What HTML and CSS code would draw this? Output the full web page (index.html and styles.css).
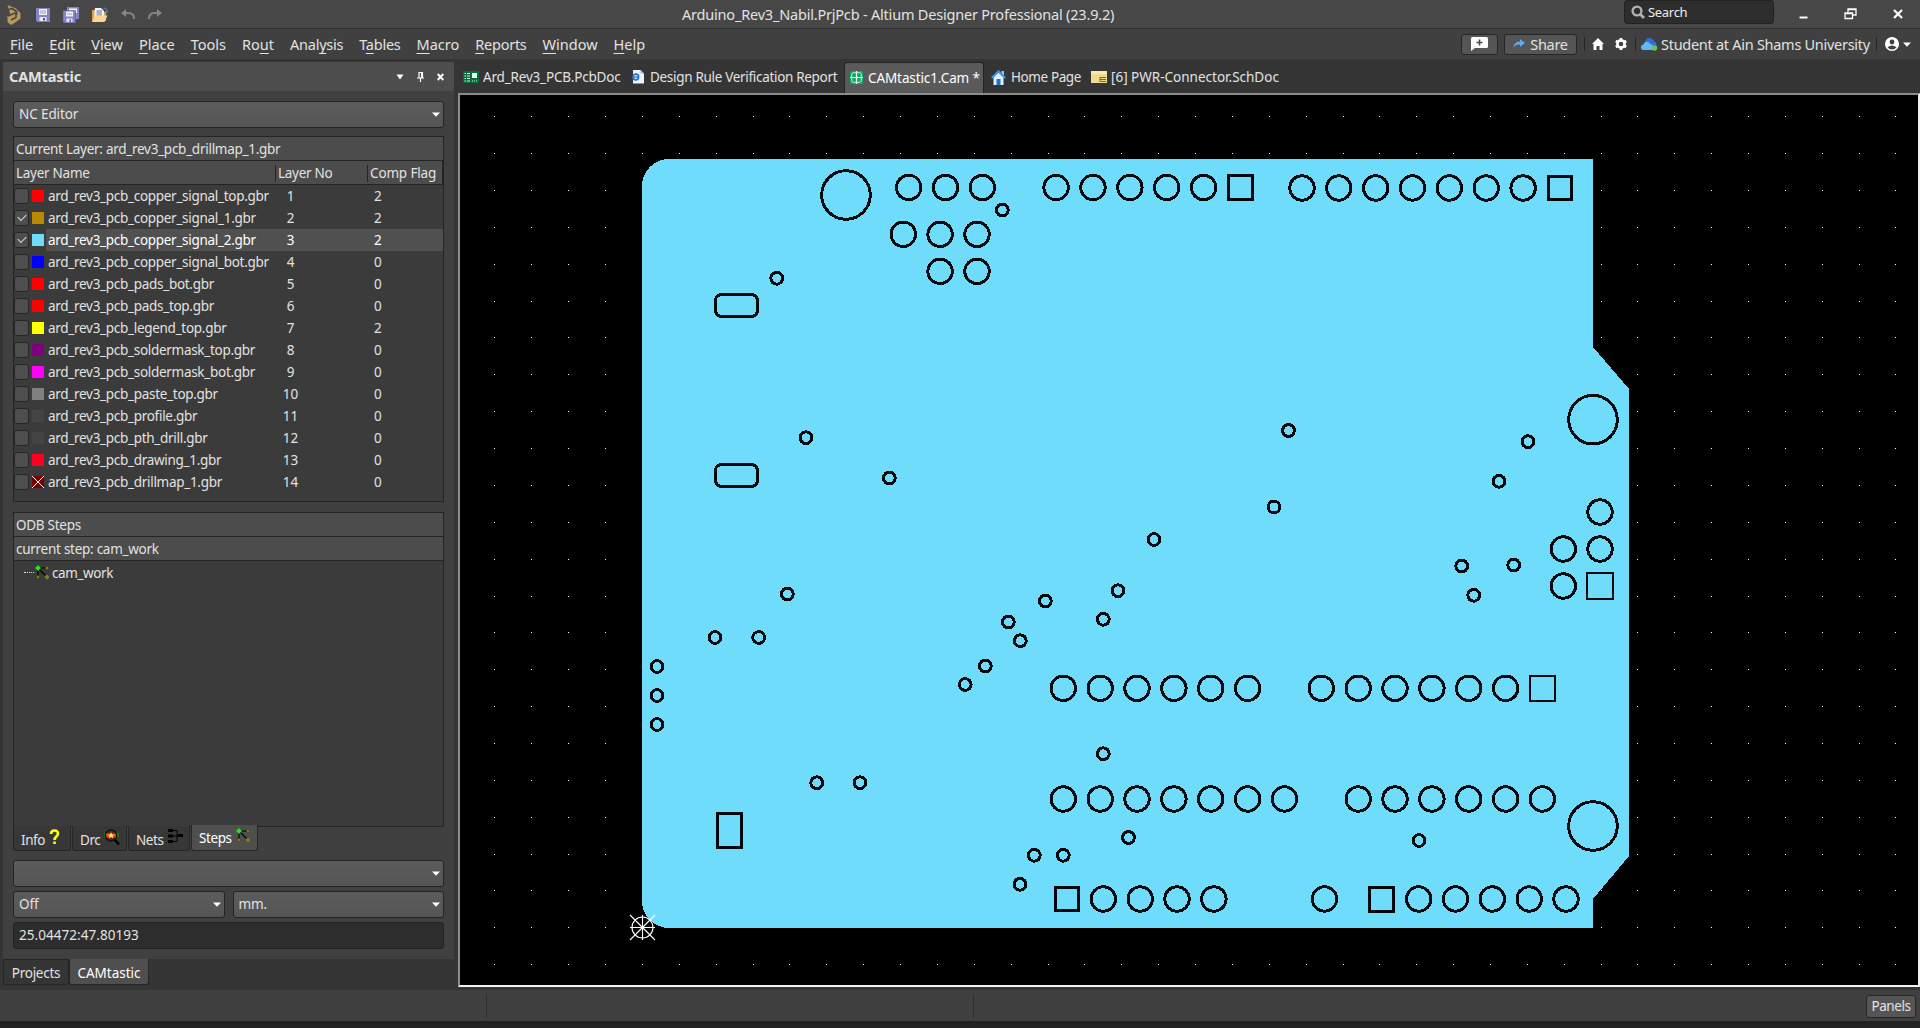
FILE: index.html
```
<!DOCTYPE html>
<html lang="en">
<head>
<meta charset="utf-8">
<title>Arduino_Rev3_Nabil.PrjPcb - Altium Designer Professional (23.9.2)</title>
<link rel="stylesheet" href="styles.css">
</head>
<body>
<svg class="defs" width="0" height="0" aria-hidden="true">
  <defs>
    <symbol id="steps-icon" viewBox="0 0 16 16">
      <path d="M3 3H12M3 3V12M3 3L12 12" stroke="#000" stroke-width="1.2" fill="none"/>
      <path d="M3 0L6 3L3 6L0 3Z" fill="#1fe41f"/>
      <path d="M12 1L14 3L12 5L10 3ZM3 10L5 12L3 14L1 12ZM12 9L15 12L12 15L9 12Z" fill="#80801c" stroke="#222" stroke-width=".4"/>
    </symbol>
    <symbol id="caret" viewBox="0 0 8 5"><path d="M0 0.5H8L4 4.8Z" fill="#fff"/></symbol>
  </defs>
</svg>
<div class="app">
  <header class="titlebar">
    <div class="quick">
      <svg width="14" height="20" viewBox="0 0 14 20"><path d="M.5 0L9 3.500L13.500 8V13.500L9 17L4 20L.5 17V11L6 7.500H9V12L5 14.500" fill="#b59a5c"/><path d="M.5 5L5 3.500L9.500 6.500V10M1 11L8 8" stroke="#474747" stroke-width="1.800" fill="none"/><path d="M4 15L9 12.500V7" stroke="#474747" stroke-width="1.600" fill="none"/></svg>
      <svg width="14" height="14" viewBox="0 0 14 14"><path d="M0 0H14V14H1.500L0 12.500Z" fill="#8583c8"/><path d="M3 1H11V7H3Z" fill="#f2f2fb"/><path d="M4 3H10M4 5H10" stroke="#9a9ac0"/><path d="M3.500 9H10.500V13H3.500Z" fill="#e8e8f4"/><path d="M7 10H9V12.500H7Z" fill="#55558f"/></svg>
      <svg width="16" height="16" viewBox="0 0 16 16"><path d="M4 0H16V12H4Z" fill="#8583c8"/><path d="M6 1.500H14V6H6Z" fill="#f2f2fb"/><path d="M0 3.500H12.500V16H1.500L0 14.500Z" fill="#8583c8" stroke="#5c5a92" stroke-width=".6"/><path d="M3 4.500H10V9.500H3Z" fill="#f2f2fb"/><path d="M4 7H9" stroke="#9a9ac0"/><path d="M3.500 11.500H9.500V15H3.500Z" fill="#e8e8f4"/><path d="M6.500 12.500H8V15H6.500Z" fill="#55558f"/></svg>
      <svg width="16" height="16" viewBox="0 0 16 16"><path d="M0 3H5L6 5H14V14H0Z" fill="#d9a14b"/><path d="M3 1H9L12 4V11H2Z" fill="#f4f6fa"/><path d="M4.500 4H10M4.500 6H10M4.500 8H10" stroke="#5d6f92"/><path d="M0 15L3 8.500H15.500L12.500 15Z" fill="#f7d792"/><path d="M11 1.500C14 .5 15 2 15 5M13 4L15 5.500L16 3.500" stroke="#4a7ba6" stroke-width="1.200" fill="none"/></svg>
      <svg class="undo" width="14" height="12" viewBox="0 0 14 12"><path d="M1 4H7.500C11 4 13 6.500 13 10" stroke="#848484" stroke-width="2" fill="none"/><path d="M0 4L5 0V8Z" fill="#848484"/></svg>
      <svg class="redo" width="14" height="12" viewBox="0 0 14 12"><path d="M13 4H6.500C3 4 1 6.500 1 10" stroke="#848484" stroke-width="2" fill="none"/><path d="M14 4L9 0V8Z" fill="#848484"/></svg>
    </div>
    <div class="caption"><span>Arduino_Rev3_Nabil.PrjPcb - Altium Designer Professional (23.9.2)</span></div>
    <div class="search"><svg width="14" height="14" viewBox="0 0 14 14"><circle cx="6" cy="6" r="4.400" fill="none" stroke="#b0b0b0" stroke-width="2.400"/><path d="M9.200 9.200L13 13" stroke="#b0b0b0" stroke-width="2.800"/></svg><span>Search</span></div>
    <div class="winbtns">
      <svg width="9" height="12" viewBox="0 0 9 12"><path d="M0.500 9.500H8.500" stroke="#fff" stroke-width="2"/></svg>
      <svg width="13" height="12" viewBox="0 0 13 12"><path d="M4 4V1H12V7H9M4 1.500H12" stroke="#fff" stroke-width="1.300" fill="none"/><path d="M1 5H8.500V10.500H1ZM1 5.500H8.500" stroke="#fff" stroke-width="1.300" fill="none"/></svg>
      <svg width="10" height="10" viewBox="0 0 10 10"><path d="M1 1L9 9M9 1L1 9" stroke="#fff" stroke-width="2.200"/></svg>
    </div>
  </header>

  <nav class="menubar">
    <div class="menus">
      <span><u>F</u>ile</span><span><u>E</u>dit</span><span><u>V</u>iew</span><span><u>P</u>lace</span><span><u>T</u>ools</span><span>Ro<u>u</u>t</span><span class="tight">Anal<u>y</u>sis</span><span class="tight">T<u>a</u>bles</span><span><u>M</u>acro</span><span class="tight"><u>R</u>eports</span><span><u>W</u>indow</span><span><u>H</u>elp</span>
    </div>
    <div class="account">
      <button class="btn note"><svg width="17" height="14" viewBox="0 0 17 14"><path d="M1.500 0H15.500Q17 0 17 1.500V9.500Q17 11 15.500 11H4L0 14V1.500Q0 0 1.500 0Z" fill="#fff"/><path d="M8.500 2.500V8.500M5.500 5.500H11.500" stroke="#4a4a4a" stroke-width="1.600"/></svg></button>
      <button class="btn share"><svg width="12" height="10" viewBox="0 0 12 10"><path d="M7 0L12 4L7 8V5.500C4 5.300 2 6.300 0 8.800C.7 5 3 2.800 7 2.600Z" fill="#62a8f0"/></svg><span>Share</span></button>
      <i class="sep"></i>
      <svg class="home" width="12" height="12" viewBox="0 0 12 12"><path d="M6 0L12 6H10.500V12H7.500V8H4.500V12H1.500V6H0Z" fill="#fff"/></svg>
      <svg class="gear" width="12" height="12" viewBox="0 0 12 12"><circle cx="6" cy="6" r="3.600" fill="none" stroke="#fff" stroke-width="2.600"/><path d="M6 0V2M6 10V12M.8 3L2.600 4M9.400 8L11.200 9M.8 9L2.600 8M9.400 4L11.200 3" stroke="#fff" stroke-width="2.600"/></svg>
      <i class="sep"></i>
      <svg class="cloud" width="17" height="13" viewBox="0 0 17 13"><path d="M4 5C4 2 6 0 8.500 0S12.500 2 13 3.500C15 4 16 5.500 15.500 8L9 9Z" fill="#2f6fd6"/><path d="M3 12C-1 12-1 7 2.500 6.500C3 3 8 3 9 6C12 6 12.500 9 11.500 12Z" fill="#64b8f4"/><circle cx="13.500" cy="10" r="2.800" fill="#67c15e"/></svg>
      <span class="student">Student at Ain Shams University</span>
      <i class="sep"></i>
      <svg class="user" width="14" height="14" viewBox="0 0 14 14"><circle cx="7" cy="7" r="7" fill="#fff"/><circle cx="7" cy="5" r="2.400" fill="#404040"/><path d="M2.500 10.200Q7 6.800 11.500 10.200Q9.800 12.600 7 12.600T2.500 10.200Z" fill="#404040"/></svg>
      <svg width="8" height="5"><use href="#caret"/></svg>
    </div>
  </nav>

  <main class="work">
    <aside class="side">
      <section class="panel">
        <div class="panel-head"><b>CAMtastic</b>
          <svg width="8" height="6" viewBox="0 0 8 6"><path d="M.5 .5H7.500L4 5.500Z" fill="#fff"/></svg>
          <svg width="7" height="10" viewBox="0 0 7 10"><path d="M1.500 .5H5.500V5.500M2 .5V5.500M0 6H7M3.500 6V10" stroke="#fff" stroke-width="1.200" fill="none"/><path d="M4 1H6V6H4Z" fill="#fff"/></svg>
          <svg width="7" height="8" viewBox="0 0 7 8"><path d="M.7 1L6.300 7M6.300 1L.7 7" stroke="#fff" stroke-width="1.900"/></svg>
        </div>
        <div class="panel-body">
          <div class="combo"><span>NC Editor</span><svg width="8" height="5"><use href="#caret"/></svg></div>
          <div class="list layers">
            <div class="hd"><span>Current Layer: ard_rev3_pcb_drillmap_1.gbr</span></div>
            <div class="hd cols"><span>Layer Name</span><span>Layer No</span><span>Comp Flag</span></div>
            <div class="row"><i class="cb"></i><i class="sw red"></i><div><span>ard_rev3_pcb_copper_signal_top.gbr</span><span>1</span><span>2</span></div></div>
            <div class="row"><i class="cb on"></i><i class="sw gold"></i><div><span>ard_rev3_pcb_copper_signal_1.gbr</span><span>2</span><span>2</span></div></div>
            <div class="row sel"><i class="cb on"></i><i class="sw sky"></i><div><span>ard_rev3_pcb_copper_signal_2.gbr</span><span>3</span><span>2</span></div></div>
            <div class="row"><i class="cb"></i><i class="sw blue"></i><div><span>ard_rev3_pcb_copper_signal_bot.gbr</span><span>4</span><span>0</span></div></div>
            <div class="row"><i class="cb"></i><i class="sw red"></i><div><span>ard_rev3_pcb_pads_bot.gbr</span><span>5</span><span>0</span></div></div>
            <div class="row"><i class="cb"></i><i class="sw red"></i><div><span>ard_rev3_pcb_pads_top.gbr</span><span>6</span><span>0</span></div></div>
            <div class="row"><i class="cb"></i><i class="sw yellow"></i><div><span>ard_rev3_pcb_legend_top.gbr</span><span>7</span><span>2</span></div></div>
            <div class="row"><i class="cb"></i><i class="sw purple"></i><div><span>ard_rev3_pcb_soldermask_top.gbr</span><span>8</span><span>0</span></div></div>
            <div class="row"><i class="cb"></i><i class="sw magenta"></i><div><span>ard_rev3_pcb_soldermask_bot.gbr</span><span>9</span><span>0</span></div></div>
            <div class="row"><i class="cb"></i><i class="sw gray"></i><div><span>ard_rev3_pcb_paste_top.gbr</span><span>10</span><span>0</span></div></div>
            <div class="row"><i class="cb"></i><i class="sw dim"></i><div><span>ard_rev3_pcb_profile.gbr</span><span>11</span><span>0</span></div></div>
            <div class="row"><i class="cb"></i><i class="sw dim"></i><div><span>ard_rev3_pcb_pth_drill.gbr</span><span>12</span><span>0</span></div></div>
            <div class="row"><i class="cb"></i><i class="sw crimson"></i><div><span>ard_rev3_pcb_drawing_1.gbr</span><span>13</span><span>0</span></div></div>
            <div class="row"><i class="cb"></i><i class="sw cross"></i><div><span>ard_rev3_pcb_drillmap_1.gbr</span><span>14</span><span>0</span></div></div>
          </div>
          <div class="list steps">
            <div class="hd"><span>ODB Steps</span></div>
            <div class="hd"><span>current step: cam_work</span></div>
            <div class="tree"><i></i><svg width="16" height="16"><use href="#steps-icon"/></svg><span>cam_work</span></div>
          </div>
          <div class="subtabs">
            <div><span>Info</span><svg width="11" height="16" viewBox="0 0 11 16"><path d="M2 5C2 0 9 0 9 4.500C9 7.500 5.500 7.500 5.500 11M5.500 12.500V15" stroke="#444400" stroke-width="4" fill="none"/><path d="M2 5C2 0.500 9 0.500 9 4.500C9 7.500 5.500 7.500 5.500 11M5.500 12.500V15" stroke="#ffff1c" stroke-width="2.600" fill="none"/></svg></div>
            <div><span>Drc</span><svg width="16" height="16" viewBox="0 0 16 16"><path d="M0 6H15" stroke="#0a7a1a" stroke-width="5"/><circle cx="7" cy="6.500" r="5.500" fill="#5a2a10" stroke="#111" stroke-width="1.500"/><path d="M2 4.500H12V8.500H2Z" fill="#e03a1c"/><path d="M7 3L8 5.500H11L8.500 7L9.500 9.500L7 8L4.500 9.500L5.500 7L3 5.500H6Z" fill="#ffe45a"/><path d="M11 11L15 15.500" stroke="#000" stroke-width="2.500"/></svg></div>
            <div><span>Nets</span><svg width="15" height="14" viewBox="0 0 15 14"><path d="M0 0H5V3H0ZM0 5.500H5V8.500H0ZM0 11H5V14H0ZM10 5H15V8H10Z" fill="#000"/><path d="M5 1.500H9V12.500H5M5 7H15" stroke="#000" fill="none"/></svg></div>
            <div class="on"><span>Steps</span><svg width="16" height="16"><use href="#steps-icon"/></svg></div>
          </div>
          <div class="combo"><span></span><svg width="8" height="5"><use href="#caret"/></svg></div>
          <div class="pair">
            <div class="combo"><span>Off</span><svg width="8" height="5"><use href="#caret"/></svg></div>
            <div class="combo"><span>mm.</span><svg width="8" height="5"><use href="#caret"/></svg></div>
          </div>
          <div class="field"><span>25.04472:47.80193</span></div>
        </div>
      </section>
      <div class="side-tabs"><div><span>Projects</span></div><div class="on"><span>CAMtastic</span></div></div>
    </aside>

    <section class="editor">
      <div class="doctabs">
        <div><svg width="16" height="12" viewBox="0 0 16 12"><path d="M0 0H16V12H0Z" fill="#0b6b3c"/><path d="M1.500 2.500H3M4 2.500H7M1.500 5H3M4 5H7M1.500 7.500H3M4 7.500H7M1.500 10H3M4 10H7M9 10H10M11 10H12M13 10H14" stroke="#d6f5e4"/><path d="M9 2H14V7H9Z" fill="#e8fff2"/></svg><span>Ard_Rev3_PCB.PcbDoc</span></div>
        <div><svg width="12" height="14" viewBox="0 0 12 14"><path d="M1 0H8.500L12 3.500V13.500H1Z" fill="#eef3fb"/><path d="M8.500 0L12 3.500H8.500Z" fill="#9fb6d8"/><circle cx="3.800" cy="7" r="2.800" fill="none" stroke="#2370d8" stroke-width="1.700"/><path d="M1.500 7H6" stroke="#2370d8" stroke-width="1.300"/></svg><span>Design Rule Verification Report</span></div>
        <div class="on"><svg width="13" height="13" viewBox="0 0 13 13"><rect width="13" height="13" rx="1.500" fill="#16a862"/><rect x="1.700" y="1.700" width="9.600" height="9.600" rx="2" fill="none" stroke="#b8f5d6"/><path d="M6.500 0V13M0 6.500H13" stroke="#e8fff4" stroke-width="1.200"/></svg><span>CAMtastic1.Cam *</span></div>
        <div><svg width="15" height="15" viewBox="0 0 15 15"><path d="M10.500 1H13V5H10.500Z" fill="#9cc3ee"/><path d="M2.500 7L7.500 2.500L12.500 7V15H2.500Z" fill="#e4f0fc"/><path d="M.7 8L7.500 1.300L14.300 8" stroke="#3f94ea" stroke-width="2" fill="none"/><path d="M5.500 9H9.500V15H5.500Z" fill="#1f70d0"/></svg><span>Home Page</span></div>
        <div><svg width="16" height="12" viewBox="0 0 16 12"><path d="M0 0H16V12H0Z" fill="#f2db8b"/><path d="M0 0H16V3H0Z" fill="#f9eab4"/><path d="M9 6.500H15M9 6V10.500M9 8.500H15M9 10.500H15" stroke="#6d5a22" stroke-width=".9"/></svg><span>[6] PWR-Connector.SchDoc</span></div>
      </div>
      <div class="canvas">
        <svg width="1458" height="890" viewBox="460 95 1458 890">
          <defs>
            <path id="dots" d="M494 0h1M531 0h1M568 0h1M605 0h1M642 0h1M679 0h1M716 0h1M753 0h1M789 0h1M826 0h1M863 0h1M900 0h1M937 0h1M974 0h1M1011 0h1M1048 0h1M1084 0h1M1121 0h1M1158 0h1M1195 0h1M1232 0h1M1269 0h1M1306 0h1M1343 0h1M1379 0h1M1416 0h1M1453 0h1M1490 0h1M1527 0h1M1564 0h1M1601 0h1M1637 0h1M1674 0h1M1711 0h1M1748 0h1M1785 0h1M1822 0h1M1859 0h1M1895 0h1"/>
            <circle id="big" r="24.300"/>
            <circle id="pad" r="12.200"/>
            <circle id="via" r="5.900"/>
          </defs>
          <g class="dots" transform="translate(0 .5)">
            <use href="#dots" y="116"/><use href="#dots" y="153"/><use href="#dots" y="190"/><use href="#dots" y="227"/><use href="#dots" y="264"/><use href="#dots" y="301"/><use href="#dots" y="337"/><use href="#dots" y="374"/><use href="#dots" y="411"/><use href="#dots" y="448"/><use href="#dots" y="485"/><use href="#dots" y="522"/><use href="#dots" y="559"/><use href="#dots" y="596"/><use href="#dots" y="632"/><use href="#dots" y="669"/><use href="#dots" y="706"/><use href="#dots" y="743"/><use href="#dots" y="780"/><use href="#dots" y="817"/><use href="#dots" y="854"/><use href="#dots" y="890"/><use href="#dots" y="927"/><use href="#dots" y="964"/>
          </g>
          <path class="board" d="M669 159H1593V347L1629 389V856L1593 899V928H669A27 27 0 0 1 642 901V186A27 27 0 0 1 669 159Z"/>
          <g class="holes">
            <use href="#big" x="846" y="195"/><use href="#big" x="1593" y="419.700"/><use href="#big" x="1593" y="826"/>
            <use href="#pad" x="908.700" y="187.500"/><use href="#pad" x="945.500" y="187.500"/><use href="#pad" x="982.400" y="187.500"/>
            <use href="#pad" x="1056.100" y="187.500"/><use href="#pad" x="1093" y="187.500"/><use href="#pad" x="1129.900" y="187.500"/><use href="#pad" x="1166.700" y="187.500"/><use href="#pad" x="1203.600" y="187.500"/>
            <rect x="1228.500" y="175.500" width="24" height="24"/>
            <use href="#pad" x="1302" y="188"/><use href="#pad" x="1338.800" y="188"/><use href="#pad" x="1375.700" y="188"/><use href="#pad" x="1412.500" y="188"/><use href="#pad" x="1449.400" y="188"/><use href="#pad" x="1486.200" y="188"/><use href="#pad" x="1523.100" y="188"/>
            <rect x="1548.500" y="176.500" width="23" height="23"/>
            <use href="#pad" x="903.300" y="234.300"/><use href="#pad" x="940.100" y="234.300"/><use href="#pad" x="977" y="234.300"/><use href="#pad" x="940.100" y="271.300"/><use href="#pad" x="977" y="271.300"/>
            <use href="#pad" x="1600" y="512"/><use href="#pad" x="1563.300" y="549"/><use href="#pad" x="1600" y="549"/><use href="#pad" x="1563.300" y="586"/>
            <rect class="thin" x="1587" y="573" width="26" height="26"/>
            <use href="#pad" x="1063.300" y="688.300"/><use href="#pad" x="1100.200" y="688.300"/><use href="#pad" x="1137" y="688.300"/><use href="#pad" x="1173.900" y="688.300"/><use href="#pad" x="1210.700" y="688.300"/><use href="#pad" x="1247.600" y="688.300"/>
            <use href="#pad" x="1321.300" y="688.300"/><use href="#pad" x="1358.200" y="688.300"/><use href="#pad" x="1395" y="688.300"/><use href="#pad" x="1431.900" y="688.300"/><use href="#pad" x="1468.700" y="688.300"/><use href="#pad" x="1505.600" y="688.300"/>
            <rect class="thin" x="1530" y="676" width="25" height="25"/>
            <use href="#pad" x="1063.300" y="799"/><use href="#pad" x="1100.200" y="799"/><use href="#pad" x="1137" y="799"/><use href="#pad" x="1173.900" y="799"/><use href="#pad" x="1210.700" y="799"/><use href="#pad" x="1247.600" y="799"/><use href="#pad" x="1284.500" y="799"/>
            <use href="#pad" x="1358.200" y="799"/><use href="#pad" x="1395" y="799"/><use href="#pad" x="1431.900" y="799"/><use href="#pad" x="1468.700" y="799"/><use href="#pad" x="1505.600" y="799"/><use href="#pad" x="1542.400" y="799"/>
            <rect x="1055.500" y="887.500" width="23" height="23"/>
            <use href="#pad" x="1103.300" y="899"/><use href="#pad" x="1140.200" y="899"/><use href="#pad" x="1177" y="899"/><use href="#pad" x="1213.900" y="899"/><use href="#pad" x="1324.500" y="899"/>
            <rect x="1369.500" y="887.500" width="24" height="24"/>
            <use href="#pad" x="1418.700" y="899"/><use href="#pad" x="1455.500" y="899"/><use href="#pad" x="1492.300" y="899"/><use href="#pad" x="1529.200" y="899"/><use href="#pad" x="1566" y="899"/>
            <rect x="715.500" y="294.500" width="42" height="22" rx="6"/><rect x="715.500" y="464.500" width="42" height="22" rx="6"/>
            <rect x="717.500" y="813.500" width="24" height="34"/>
            <use href="#via" x="1002.300" y="210"/><use href="#via" x="776.700" y="278.300"/><use href="#via" x="806" y="437.700"/><use href="#via" x="889.300" y="478"/><use href="#via" x="1288.500" y="430.500"/><use href="#via" x="1528" y="441.700"/><use href="#via" x="1499" y="481.300"/><use href="#via" x="1461.700" y="566"/><use href="#via" x="1513.700" y="565"/><use href="#via" x="1473.700" y="595.300"/>
            <use href="#via" x="787.300" y="594"/><use href="#via" x="715" y="637.500"/><use href="#via" x="758.700" y="637.500"/><use href="#via" x="657" y="666.500"/><use href="#via" x="657" y="695.500"/><use href="#via" x="657" y="724.500"/>
            <use href="#via" x="1045.300" y="601"/><use href="#via" x="1008.300" y="622"/><use href="#via" x="1020.300" y="640.700"/><use href="#via" x="985.300" y="666"/><use href="#via" x="965.300" y="684.500"/><use href="#via" x="1103.300" y="619.300"/><use href="#via" x="1118" y="590.700"/><use href="#via" x="1154" y="539.500"/><use href="#via" x="1274" y="507"/>
            <use href="#via" x="1103.300" y="753.700"/><use href="#via" x="816.700" y="782.700"/><use href="#via" x="860" y="782.700"/><use href="#via" x="1034.300" y="855.300"/><use href="#via" x="1063.300" y="855.300"/><use href="#via" x="1020" y="884.300"/><use href="#via" x="1128.500" y="837.500"/><use href="#via" x="1419" y="840.500"/>
          </g>
          <g class="origin"><circle cx="642.500" cy="927.500" r="10.500"/><path d="M630 927.500H655M642.500 915V940M630 915L655 940M655 915L630 940"/></g>
        </svg>
      </div>
    </section>
  </main>

  <footer class="status"><i></i><i></i><button class="btn panels"><span>Panels</span></button></footer>
  <div class="edge"></div>
</div>
</body>
</html>
```
FILE: styles.css
```
* { box-sizing: border-box; }
body { margin: 0; background: #353535; color: #e2e2e2; font: 13.5px/20px "Noto Sans", "Open Sans", sans-serif; overflow: hidden; }
svg { display: block; flex: none; }
span { white-space: nowrap; }
u { text-underline-offset: 3px; text-decoration-thickness: 1px; }
.defs { position: absolute; }
.app { width: 1920px; height: 1028px; display: flex; flex-direction: column; }

.titlebar { height: 29px; flex: none; display: grid; grid-template-columns: 682px 1fr 150px 146px; background: #474747; border-bottom: 1px solid #303030; font-size: 14.5px; }
.quick { display: flex; align-items: center; padding-left: 7px; gap: 13px; }
.quick svg:nth-child(1) { margin-right: 2px; }
.caption { line-height: 29px; letter-spacing: -0.2px; }
.search { height: 24px; background: #2d2d2d; border: 1px solid #222; border-radius: 3px; display: flex; align-items: center; gap: 3px; padding-left: 6px; font-size: 13px; letter-spacing: -0.3px; color: #ededed; }
.winbtns { display: flex; align-items: center; padding: 0 0 2px 25px; gap: 36px; }

.menubar { height: 30px; flex: none; background: #404040; display: flex; justify-content: space-between; align-items: center; font-size: 14.5px; }
.menus { display: flex; gap: 16px; padding-left: 10px; }
.menus .tight { letter-spacing: -0.25px; }
.account { display: flex; align-items: center; }
.btn { display: flex; align-items: center; justify-content: center; height: 21px; background: #555; border: 1px solid #262626; border-radius: 3px; color: #e2e2e2; font: inherit; padding: 0; }
.note { width: 37px; margin-right: 6px; }
.share { width: 73px; gap: 5px; margin-right: 7px; letter-spacing: -0.3px; }
.sep { width: 1px; height: 14px; background: #262626; }
.home { margin: 0 11px 0 7px; }
.gear { margin-right: 8px; }
.cloud { margin: 0 3px 0 5px; }
.student { width: 209px; margin-right: 6px; letter-spacing: -0.28px; }
.user { margin: 0 4px 0 8px; }
.account > svg:last-child { margin-right: 9px; }

.work { flex: 1; min-height: 0; display: flex; padding-top: 3px; }
.side { width: 451px; margin: 0 4px 0 3px; flex: none; letter-spacing: -0.27px; }
.panel { height: 897px; background: #404040; display: flex; flex-direction: column; }
.panel-head { height: 29px; background: #4d4d4d; display: flex; align-items: center; padding: 0 10px 0 6px; font-size: 14.5px; letter-spacing: -0.15px; }
.panel-head b { flex: 1; line-height: 20px; padding-bottom: 1px; }
.panel-head svg + svg { margin-left: 13px; }
.panel-body { padding: 10px 10px 0; }
.combo { height: 27px; flex: 1; display: flex; align-items: center; justify-content: space-between; padding: 0 3px 1px 5px; background: linear-gradient(#5c5c5c, #555); border: 1px solid #242424; border-radius: 3px; letter-spacing: -0.1px; }
.list { border: 1px solid #242424; background: #3b3b3b; }
.layers { margin-top: 8px; height: 366px; }
.hd { height: 24px; background: #4c4c4c; border-bottom: 1px solid #242424; padding-left: 2px; line-height: 24px; }
.cols { display: grid; grid-template-columns: 261px 92px 1fr; padding: 4px 0 0; border-right: 1px solid #242424; }
.cols span { height: 17px; line-height: 17px; padding-left: 2px; }
.cols span + span { border-left: 1px solid #242424; }
.cols span:last-child { letter-spacing: -0.15px; }
.row { height: 22px; display: flex; align-items: center; }
.cb { width: 15px; height: 16px; border: 1px solid #262626; border-radius: 3px; background: #4e4e4e; margin-right: 3px; }
.cb.on::after { content: ""; display: block; width: 7px; height: 4px; margin: 3px 0 0 3px; border: solid #ddd; border-width: 0 0 1px 1px; transform: rotate(-45deg); }
.sw { width: 12px; height: 12px; margin-right: 2px; }
.row div { flex: 1; display: grid; grid-template-columns: 227px 30px 69px auto; height: 22px; line-height: 23px; padding-left: 2px; }
.row div span:nth-child(1) { letter-spacing: -0.29px; }
.row div span:nth-child(2) { text-align: center; padding-left: 1px; letter-spacing: 0; }
.row div span:nth-child(3) { grid-column: 4; }
.sel div { background: #505050; color: #fff; }
.red { background: #f00; } .gold { background: #b88a00; } .sky { background: #70dcfc; } .blue { background: #00f; }
.yellow { background: #ff0; } .purple { background: #800080; } .magenta { background: #f0f; } .gray { background: #808080; }
.dim { background: #444; } .crimson { background: #ff0020; }
.cross { background: linear-gradient(45deg, transparent 46%, #fff 46%, #fff 54%, transparent 54%), linear-gradient(-45deg, transparent 46%, #fff 46%, #fff 54%, transparent 54%), #7a0000; }
.steps { margin-top: 10px; height: 315px; }
.tree { display: flex; align-items: center; height: 23px; padding-left: 10px; letter-spacing: -0.4px; }
.tree i { width: 10px; border-top: 1px dotted #ddd; }
.tree svg { margin: 0 1px; }
.subtabs { display: flex; height: 25px; margin-top: -1px; gap: 1px; margin-bottom: 9px; }
.subtabs div { display: flex; gap: 4px; border: 1px solid #262626; border-top: 0; border-radius: 0 0 3px 3px; background: #373737; padding: 3px 0 0 7px; line-height: 22px; letter-spacing: -0.4px; }
.subtabs div:nth-child(1) { width: 58px; } .subtabs div:nth-child(2) { width: 55px; } .subtabs div:nth-child(3) { width: 62px; }
.subtabs .on { width: 67px; background: #4f4f4f; padding-top: 3px; line-height: 20px; color: #fff; margin-top: -1px; height: 26px; }
.pair { display: flex; gap: 8px; margin: 4px 0; }
.field { height: 27px; background: #2d2d2d; border: 1px solid #242424; border-radius: 3px; padding-left: 5px; line-height: 25px; letter-spacing: 0.05px; }
.side-tabs { display: flex; height: 26px; }
.side-tabs div { width: 66px; border: 1px solid #262626; border-radius: 0 0 3px 3px; text-align: center; line-height: 27px; }
.side-tabs .on { width: 80px; background: #4f4f4f; border-top: 0; color: #fff; line-height: 29px; letter-spacing: 0; }

.editor { flex: 1; min-width: 0; }
.doctabs { display: flex; height: 31px; letter-spacing: -0.18px; }
.doctabs div { display: flex; align-items: center; gap: 4px; padding: 0 0 1px 5px; height: 31px; }
.doctabs div:nth-child(1) { width: 168px; } .doctabs div:nth-child(2) { width: 218px; gap: 6px; padding-left: 6px; letter-spacing: -0.31px; }
.doctabs .on { width: 140px; background: #5a5a5a; border: 1px solid #222; border-bottom: 0; border-radius: 3px 3px 0 0; gap: 5px; letter-spacing: -0.1px; color: #fff; }
.doctabs div:nth-child(4) { width: 101px; padding-left: 7px; gap: 5px; letter-spacing: -0.4px; }
.doctabs div:nth-child(5) { letter-spacing: 0; padding-left: 6px; }
.canvas { width: 1462px; height: 894px; background: #000; border: 2px solid #8c8c8c; border-right-color: #f2f2f2; border-bottom-color: #f2f2f2; }
.dots { stroke: #fff; stroke-width: 1; shape-rendering: crispEdges; }
.board { fill: #70dcfc; shape-rendering: crispEdges; }
.holes { fill: none; stroke: #02080c; stroke-width: 3; shape-rendering: crispEdges; }
.holes .thin { stroke-width: 2; }
.origin { fill: none; stroke: #fff; stroke-width: 1.1; }

.status { height: 31px; flex: none; background: #404040; display: flex; align-items: center; }
.status i { width: 487px; height: 24px; border-right: 1px solid #303030; }
.panels { width: 50px; height: 23px; margin: 1px 4px 0 auto; font-size: 13.5px; letter-spacing: -0.4px; }
.edge { height: 7px; flex: none; background: #222; }
```
